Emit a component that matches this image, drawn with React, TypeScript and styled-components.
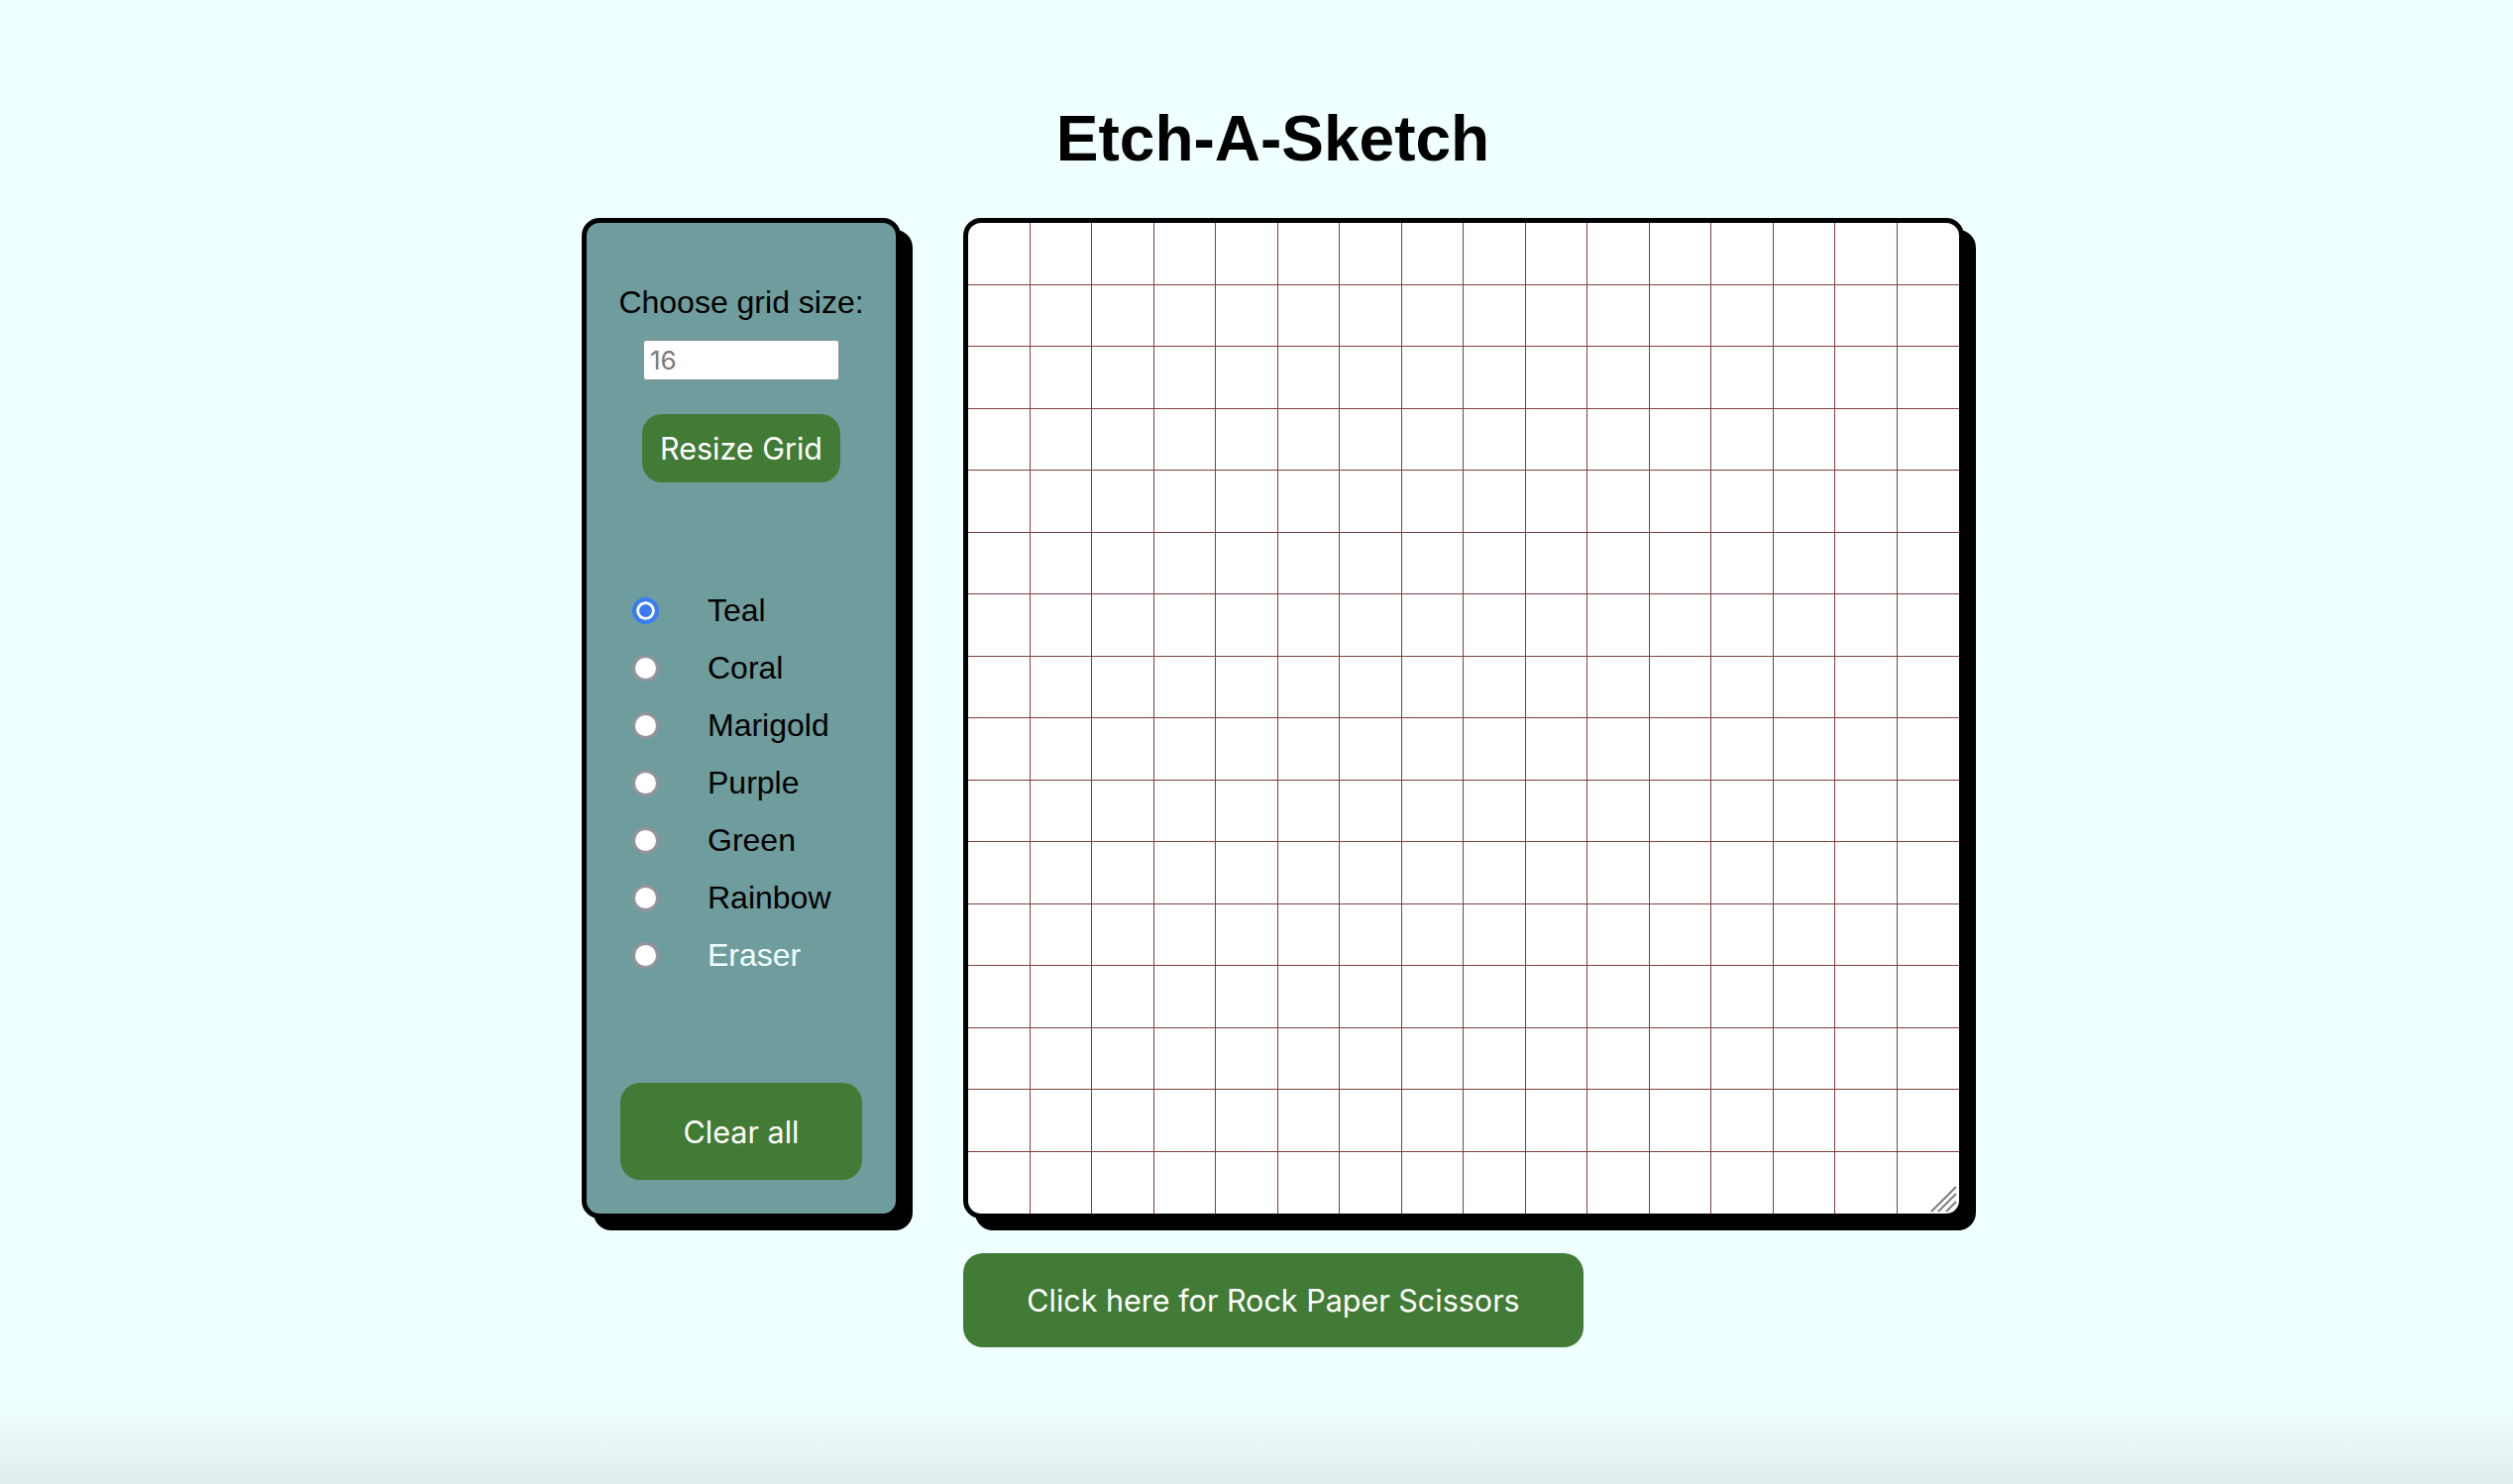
import React, { useState } from "react";
import styled, { createGlobalStyle } from "styled-components";

const GlobalStyle = createGlobalStyle`
  html, body {
    margin: 0;
    padding: 0;
    background: #f0ffff;
  }
  * { box-sizing: border-box; }
`;

const Page = styled.div`
  min-height: 100vh;
  display: flex;
  flex-direction: column;
  align-items: center;
  padding-left: 33px;
  background: linear-gradient(to bottom, #f0ffff 0, #f0ffff calc(100% - 90px), #e2eeee 100%);
`;

const Title = styled.h1`
  margin: 103px 0 43px;
  font-family: "Liberation Sans", Arial, sans-serif;
  font-size: 64px;
  font-weight: 700;
  line-height: normal;
  color: #000;
`;

const Main = styled.div`
  display: flex;
  align-items: flex-start;
  gap: 63px;
`;

const Panel = styled.div`
  width: 322px;
  height: 1010px;
  border: 5px solid #000;
  border-radius: 18px;
  background: #6f9d9d;
  box-shadow: 12px 12px 0 #000;
  display: flex;
  flex-direction: column;
  align-items: center;
  padding-top: 62px;
`;

const SizeLabel = styled.label`
  font-family: "Liberation Sans", Arial, sans-serif;
  font-size: 32px;
  line-height: normal;
  color: #000;
`;

const SizeInput = styled.input`
  margin-top: 19px;
  width: 198px;
  height: 41px;
  border: 1px solid #8d8d8d;
  border-radius: 3px;
  background: #fff;
  padding: 0 6px;
  font-family: Inter, "Liberation Sans", sans-serif;
  font-size: 26px;
  color: #333;
  outline: none;
  &::placeholder { color: #7a7a7a; }
`;

const GreenButton = styled.button<{ $w: number; $h: number }>`
  width: ${(p) => p.$w}px;
  height: ${(p) => p.$h}px;
  border: none;
  border-radius: 20px;
  background: #417b35;
  color: #fff;
  font-family: Inter, "Liberation Sans", sans-serif;
  font-size: 30.5px;
  font-weight: 400;
  padding: 0;
  cursor: pointer;
`;

const ResizeButton = styled(GreenButton)`
  margin-top: 34px;
`;

const ClearButton = styled(GreenButton)`
  margin-top: 100px;
`;

const RadioList = styled.div`
  align-self: stretch;
  margin-top: 100px;
  padding-left: 46px;
  display: flex;
  flex-direction: column;
`;

const RadioRow = styled.label`
  height: 58px;
  display: grid;
  grid-template-columns: 27px auto;
  column-gap: 49px;
  align-items: center;
  justify-content: start;
  cursor: pointer;
`;

const Radio = styled.input`
  appearance: none;
  -webkit-appearance: none;
  margin: 0;
  width: 27px;
  height: 27px;
  border-radius: 50%;
  background: #fff;
  border: 3px solid #94949c;
  &:checked {
    border: 4px solid #3b7cf5;
    background: #3b7cf5;
    box-shadow: inset 0 0 0 3px #fff;
  }
`;

const RadioText = styled.span<{ $light?: boolean }>`
  font-family: "Liberation Sans", Arial, sans-serif;
  font-size: 32px;
  line-height: normal;
  color: ${(p) => (p.$light ? "#f0ffff" : "#000")};
`;

const RightColumn = styled.div`
  display: flex;
  flex-direction: column;
  align-items: flex-start;
  gap: 35px;
`;

const Canvas = styled.div`
  position: relative;
  width: 1010px;
  height: 1010px;
  border: 5px solid #000;
  border-radius: 18px;
  background: #fff;
  box-shadow: 12px 12px 0 #000;
  overflow: hidden;
`;

const Grid = styled.div`
  width: 100%;
  height: 100%;
  display: grid;
  grid-template-columns: repeat(16, 1fr);
  grid-template-rows: repeat(16, 1fr);
`;

const Cell = styled.div`
  border-right: 1px solid #7f4040;
  border-bottom: 1px solid #7f4040;
  &:nth-child(16n) { border-right: none; }
  &:nth-last-child(-n + 16) { border-bottom: none; }
`;

const Grip = styled.svg`
  position: absolute;
  right: 2px;
  bottom: 1px;
  width: 27px;
  height: 27px;
  pointer-events: none;
`;

const RpsButton = styled(GreenButton)`
  border-radius: 20px;
`;

const colours = ["Teal", "Coral", "Marigold", "Purple", "Green", "Rainbow", "Eraser"];

export default function App() {
  const [colour, setColour] = useState("Teal");
  const cells = Array.from({ length: 256 }, (_, i) => i);
  return (
    <>
      <GlobalStyle />
      <Page>
        <Title>Etch-A-Sketch</Title>
        <Main>
          <Panel>
            <SizeLabel htmlFor="size">Choose grid size:</SizeLabel>
            <SizeInput id="size" type="text" placeholder="16" />
            <ResizeButton $w={200} $h={69}>Resize Grid</ResizeButton>
            <RadioList>
              {colours.map((c) => (
                <RadioRow key={c}>
                  <Radio
                    type="radio"
                    name="colour"
                    checked={colour === c}
                    onChange={() => setColour(c)}
                  />
                  <RadioText $light={c === "Eraser"}>{c}</RadioText>
                </RadioRow>
              ))}
            </RadioList>
            <ClearButton $w={244} $h={98}>Clear all</ClearButton>
          </Panel>
          <RightColumn>
            <Canvas>
              <Grid>
                {cells.map((i) => (
                  <Cell key={i} />
                ))}
              </Grid>
              <Grip viewBox="0 0 27 27">
                <g stroke="#7d7d7d" strokeWidth="2" strokeLinecap="butt">
                  <line x1="1" y1="26" x2="26" y2="1" />
                  <line x1="8" y1="26" x2="26" y2="8" />
                  <line x1="16" y1="26" x2="26" y2="16" />
                </g>
              </Grip>
            </Canvas>
            <RpsButton $w={626} $h={95}>Click here for Rock Paper Scissors</RpsButton>
          </RightColumn>
        </Main>
      </Page>
    </>
  );
}
